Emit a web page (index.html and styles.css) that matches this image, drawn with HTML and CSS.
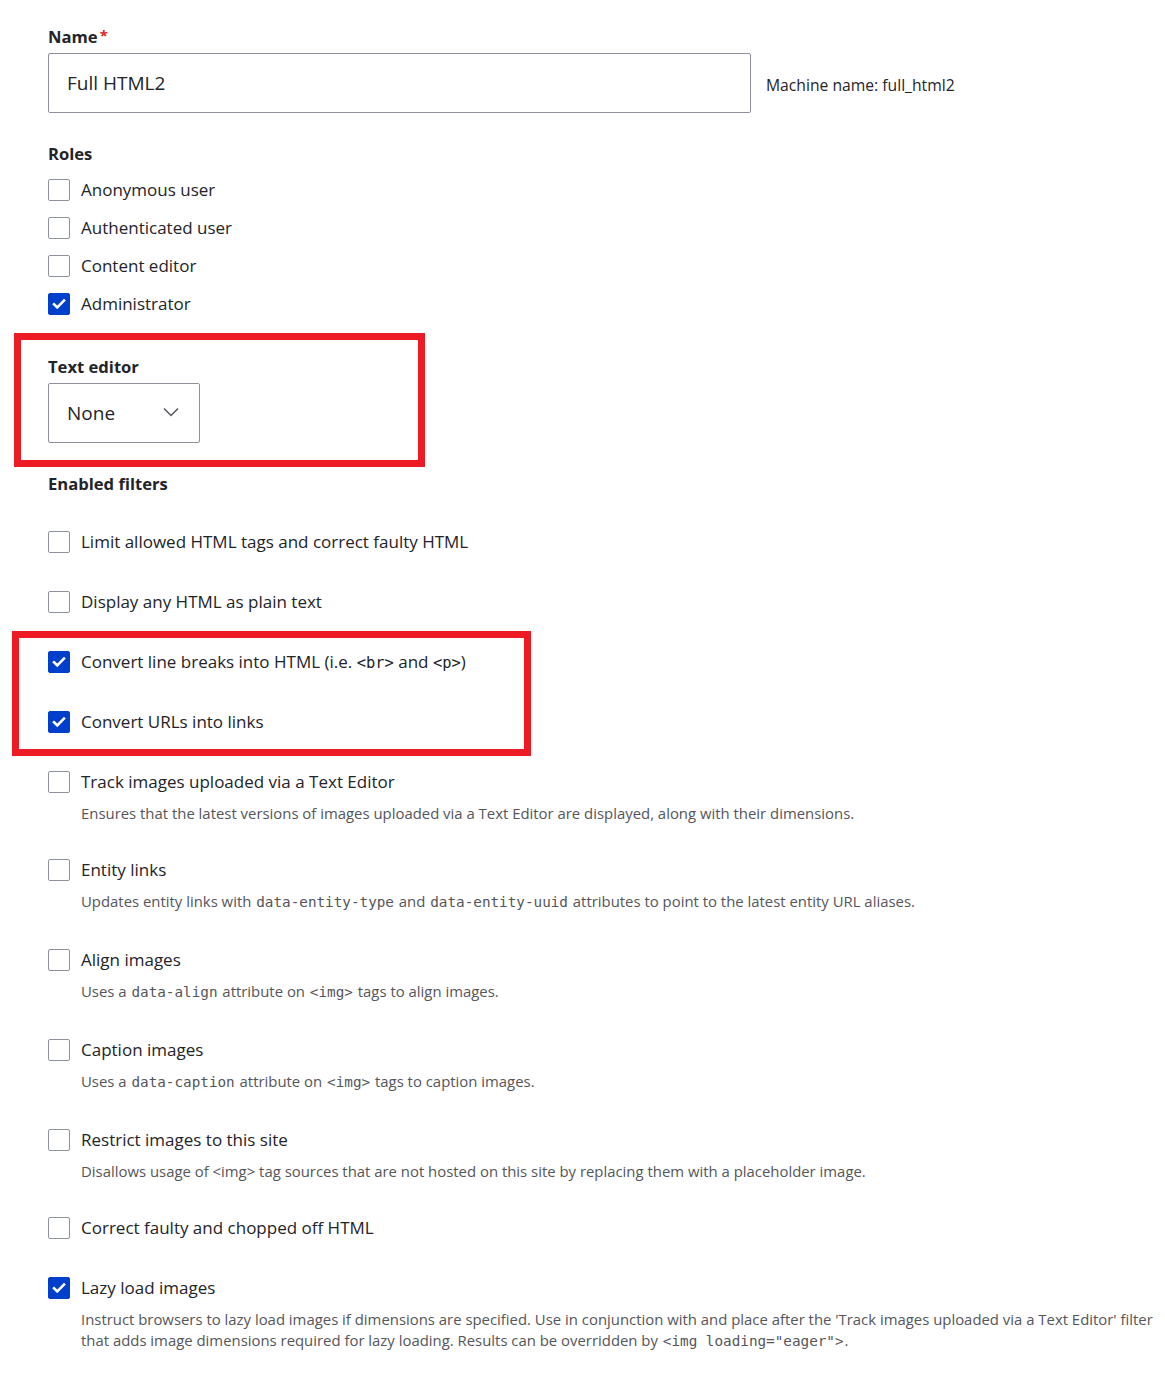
FILE: index.html
```html
<!DOCTYPE html>
<html lang="en">
<head>
  <meta charset="UTF-8">
  <title>Text format: Full HTML2</title>
  <link rel="stylesheet" href="styles.css">
</head>
<body>
  <form class="format-form">

    <label class="form-label" for="name">Name<span class="required">*</span></label>
    <div class="name-row">
      <input class="form-text" type="text" id="name" value="Full HTML2">
      <span class="machine-name">Machine name: full_html2</span>
    </div>

    <div class="form-label roles-label">Roles</div>
    <div class="roles">
      <label class="check-row"><span class="box"></span><span>Anonymous user</span></label>
      <label class="check-row"><span class="box"></span><span>Authenticated user</span></label>
      <label class="check-row"><span class="box"></span><span>Content editor</span></label>
      <label class="check-row"><span class="box checked"><svg viewBox="0 0 22 22"><path d="M5.5 11.2l3.6 3.6 7.4-7.6" /></svg></span><span>Administrator</span></label>
    </div>

    <label class="form-label editor-label" for="editor">Text editor</label>
    <div class="select-wrap">
      <select class="form-select" id="editor">
        <option>None</option>
      </select>
      <svg class="chevron" viewBox="0 0 16 10"><path d="M1 1.5l7 7 7-7" /></svg>
    </div>

    <div class="form-label filters-label">Enabled filters</div>
    <div class="filters">
      <div class="filter">
        <label class="check-row"><span class="box"></span><span>Limit allowed HTML tags and correct faulty HTML</span></label>
      </div>
      <div class="filter">
        <label class="check-row"><span class="box"></span><span>Display any HTML as plain text</span></label>
      </div>
      <div class="filter">
        <label class="check-row"><span class="box checked"><svg viewBox="0 0 22 22"><path d="M5.5 11.2l3.6 3.6 7.4-7.6" /></svg></span><span>Convert line breaks into HTML (i.e. <code>&lt;br&gt;</code> and <code>&lt;p&gt;</code>)</span></label>
      </div>
      <div class="filter">
        <label class="check-row"><span class="box checked"><svg viewBox="0 0 22 22"><path d="M5.5 11.2l3.6 3.6 7.4-7.6" /></svg></span><span>Convert URLs into links</span></label>
      </div>
      <div class="filter has-desc">
        <label class="check-row"><span class="box"></span><span>Track images uploaded via a Text Editor</span></label>
        <div class="description">Ensures that the latest versions of images uploaded via a Text Editor are displayed, along with their dimensions.</div>
      </div>
      <div class="filter has-desc has-code">
        <label class="check-row"><span class="box"></span><span>Entity links</span></label>
        <div class="description">Updates entity links with <code>data-entity-type</code> and <code>data-entity-uuid</code> attributes to point to the latest entity URL aliases.</div>
      </div>
      <div class="filter has-desc has-code">
        <label class="check-row"><span class="box"></span><span>Align images</span></label>
        <div class="description">Uses a <code>data-align</code> attribute on <code>&lt;img&gt;</code> tags to align images.</div>
      </div>
      <div class="filter has-desc has-code">
        <label class="check-row"><span class="box"></span><span>Caption images</span></label>
        <div class="description">Uses a <code>data-caption</code> attribute on <code>&lt;img&gt;</code> tags to caption images.</div>
      </div>
      <div class="filter has-desc">
        <label class="check-row"><span class="box"></span><span>Restrict images to this site</span></label>
        <div class="description">Disallows usage of &lt;img&gt; tag sources that are not hosted on this site by replacing them with a placeholder image.</div>
      </div>
      <div class="filter">
        <label class="check-row"><span class="box"></span><span>Correct faulty and chopped off HTML</span></label>
      </div>
      <div class="filter has-desc">
        <label class="check-row"><span class="box checked"><svg viewBox="0 0 22 22"><path d="M5.5 11.2l3.6 3.6 7.4-7.6" /></svg></span><span>Lazy load images</span></label>
        <div class="description">Instruct browsers to lazy load images if dimensions are specified. Use in conjunction with and place after the 'Track images uploaded via a Text Editor' filter that adds image dimensions required for lazy loading. Results can be overridden by <code>&lt;img loading="eager"&gt;</code>.</div>
      </div>
    </div>
  </form>

  <!-- annotation boxes drawn over the form -->
  <div class="mark mark-editor"></div>
  <div class="mark mark-filters"></div>
</body>
</html>
```
FILE: styles.css
```css
body {
  margin: 0;
  padding: 0 0 0 48px;
  background: #fff;
  color: #232429;
  font-family: "Open Sans", sans-serif;
  font-size: 17px;
}

.format-form {
  padding-top: 27px;
}

.form-label {
  display: block;
  font-weight: 700;
  font-size: 16.6px;
  line-height: 20px;
}

.required {
  color: #dc2323;
  margin-left: 2px;
  font-size: 15px;
  vertical-align: top;
  position: relative;
  top: -2px;
}

.name-row {
  display: flex;
  align-items: center;
  margin-top: 6px;
}

.form-text {
  width: 703px;
  height: 60px;
  box-sizing: border-box;
  margin: 0;
  padding: 0 18px;
  border: 1px solid #8e929c;
  border-radius: 2px;
  font-family: "Open Sans", sans-serif;
  font-size: 19px;
  color: #232429;
}

.machine-name {
  margin-left: 15px;
  margin-top: 4px;
  font-size: 15.7px;
}

.roles-label {
  margin-top: 31px;
}

.roles {
  margin-top: 13px;
  display: flex;
  flex-direction: column;
  gap: 12px;
}

.check-row {
  display: flex;
  align-items: center;
  line-height: 26px;
  height: 26px;
  white-space: nowrap;
}

.box {
  width: 22px;
  height: 22px;
  box-sizing: border-box;
  border: 1px solid #8e929c;
  border-radius: 2px;
  margin-right: 11px;
  flex-shrink: 0;
}

.box.checked {
  background: #003ecc;
  border-color: #003ecc;
}

.box svg {
  display: block;
  width: 20px;
  height: 20px;
  fill: none;
  stroke: #fff;
  stroke-width: 2.8;
  stroke-linecap: square;
}

.editor-label {
  margin-top: 40px;
}

.select-wrap {
  position: relative;
  width: 152px;
  margin-top: 6px;
}

.form-select {
  display: block;
  width: 152px;
  height: 60px;
  box-sizing: border-box;
  margin: 0;
  padding: 0 18px;
  border: 1px solid #8e929c;
  border-radius: 2px;
  background: #fff;
  appearance: none;
  font-family: "Open Sans", sans-serif;
  font-size: 19px;
  color: #232429;
}

.chevron {
  position: absolute;
  left: 115px;
  top: 24px;
  width: 16px;
  height: 10px;
  fill: none;
  stroke: #545560;
  stroke-width: 1.5;
}

.filters-label {
  margin-top: 31px;
}

.filters {
  margin-top: 35px;
}

.filter {
  margin-bottom: 34px;
}

.filter.has-desc {
  margin-bottom: 33px;
}

.filter.has-code {
  margin-bottom: 34px;
}

.description {
  margin-top: 8px;
  padding-left: 33px;
  font-size: 14.9px;
  line-height: 21px;
  color: #55565b;
}

code {
  font-family: "DejaVu Sans Mono", monospace;
  font-size: 15.4px;
}

.description code {
  font-size: 14.3px;
  margin: 0 1px;
}

.mark {
  position: absolute;
  border: 7px solid #ed1c24;
  box-sizing: border-box;
}

.mark-editor {
  left: 14px;
  top: 333px;
  width: 411px;
  height: 134px;
}

.mark-filters {
  left: 12px;
  top: 631px;
  width: 519px;
  height: 125px;
}
```
